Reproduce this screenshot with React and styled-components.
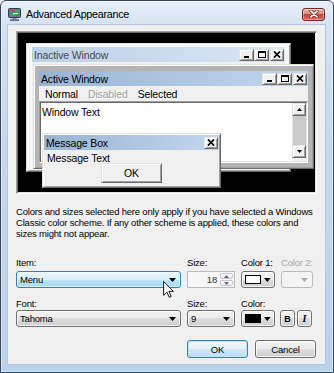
import React from 'react';
import styled, { createGlobalStyle, css } from 'styled-components';

const GlobalStyle = createGlobalStyle`
  html, body { margin: 0; padding: 0; background: #ffffff; }
  body { font-family: "Liberation Sans", Arial, sans-serif; color: #000; }
  *, *::before, *::after { box-sizing: border-box; }
`;

const raised = css`
  border: 1px solid;
  border-color: #e3e3e3 #696969 #696969 #e3e3e3;
  box-shadow: inset 1px 1px 0 #ffffff, inset -1px -1px 0 #a0a0a0;
`;

const sunken = css`
  border: 1px solid;
  border-color: #a0a0a0 #ffffff #ffffff #a0a0a0;
  box-shadow: inset 1px 1px 0 #696969, inset -1px -1px 0 #e3e3e3;
`;

const previewFont = css`
  font-size: 10.5px;
  letter-spacing: -0.15px;
  white-space: nowrap;
`;

const uiFont = css`
  font-size: 9.5px;
  letter-spacing: -0.2px;
  white-space: nowrap;
`;

/* ---------- dialog frame ---------- */

const Frame = styled.div`
  width: 334px;
  height: 373px;
  display: flex;
  flex-direction: column;
  border: 1px solid #34465e;
  border-radius: 6px 6px 0 0;
  background: linear-gradient(to bottom, #e8f0f9 0px, #d5e2f2 24px, #c4d7ed 140px, #bcd1ea 100%);
  box-shadow: inset 0 0 0 1px rgba(255, 255, 255, 0.5), inset 0 -1px 0 #86d9ef;
  overflow: hidden;
`;

const TitleBar = styled.div`
  height: 23px;
  flex: none;
  display: flex;
  align-items: center;
  padding: 3px 8px 0 7px;
`;

const AppIconBox = styled.div`
  width: 13px;
  height: 13px;
  margin-right: 5px;
  display: flex;
`;

const TitleText = styled.div`
  flex: 1;
  font-size: 10.8px;
  letter-spacing: -0.3px;
  color: #000;
  white-space: nowrap;
`;

const CloseButton = styled.div`
  width: 23px;
  height: 13px;
  border: 1px solid #6a2a24;
  border-radius: 3px;
  background: linear-gradient(to bottom, #eab2aa 0%, #dc8a7e 45%, #c5473a 50%, #d66a58 100%);
  box-shadow: inset 0 0 0 1px rgba(255, 255, 255, 0.35);
  display: flex;
  align-items: center;
  justify-content: center;
`;

const Client = styled.div`
  flex: 1;
  margin: 0 7px 7px 6px;
  background: #f0f0f0;
  border: 1px solid #b3c6dd;
  padding: 6px 8px 0 8px;
  display: flex;
  flex-direction: column;
`;

/* ---------- preview canvas ---------- */

const Preview = styled.div`
  position: relative;
  height: 163px;
  flex: none;
  background: #000;
  ${sunken}
`;

const PreviewWindow = styled.div`
  position: absolute;
  left: ${p => p.$x}px;
  top: ${p => p.$y}px;
  width: ${p => p.$w}px;
  height: ${p => p.$h}px;
  background: ${p => p.$bg};
  padding: ${p => p.$pad};
  display: flex;
  flex-direction: column;
  ${raised}
`;

const Caption = styled.div`
  height: 15px;
  flex: none;
  display: flex;
  align-items: center;
  padding: 0 1px 0 2px;
  background: ${p =>
    p.$active
      ? 'linear-gradient(to right, #99b4d1, #c3d7ee)'
      : 'linear-gradient(to right, #bcd0e7, #d9e6f4)'};
  color: ${p => (p.$active ? '#000' : '#434e54')};
  ${previewFont}
`;

const CaptionTitle = styled.span`
  flex: 1;
  overflow: hidden;
`;

const CapButton = styled.span`
  width: ${p => p.$w || 15}px;
  height: 12px;
  margin-left: ${p => p.$gap || 0}px;
  background: #f0f0f0;
  display: flex;
  align-items: center;
  justify-content: center;
  ${raised}
`;

const WindowFill = styled.div`
  flex: 1;
  background: #f0f0f0;
`;

const MenuBar = styled.div`
  height: 15px;
  flex: none;
  display: flex;
  align-items: center;
  gap: 10px;
  padding-left: 6px;
  background: #f0f0f0;
  ${previewFont}
`;

const MenuItem = styled.span`
  color: ${p => (p.$disabled ? '#a0a0a0' : '#000')};
  text-shadow: ${p => (p.$disabled ? '1px 1px 0 #ffffff' : 'none')};
`;

const TextArea = styled.div`
  flex: 1;
  display: flex;
  background: #ffffff;
  padding: 1px;
  ${sunken}
`;

const WindowText = styled.div`
  flex: 1;
  padding: 3px 0 0 1px;
  line-height: 12px;
  ${previewFont}
`;

const ScrollBar = styled.div`
  width: 14px;
  display: flex;
  flex-direction: column;
  background: #f0f0f0;
  padding-bottom: 3px;
`;

const ScrollButton = styled.div`
  height: 13px;
  flex: none;
  background: #f0f0f0;
  display: flex;
  align-items: center;
  justify-content: center;
  ${raised}
`;

const ScrollTrack = styled.div`
  flex: 1;
  background: #cbcbcb;
  border-left: 1px solid #e8e8e8;
`;

const MessageText = styled.div`
  position: relative;
  z-index: 1;
  padding: 2px 0 0 3px;
  line-height: 12px;
  ${previewFont}
`;

const ClassicButton = styled.div`
  width: 61px;
  height: 20px;
  margin: -1px 0 0 57px;
  background: #f0f0f0;
  display: flex;
  align-items: center;
  justify-content: center;
  ${raised}
  ${previewFont}
`;

/* ---------- explanation + controls ---------- */

const Note = styled.p`
  margin: 12px 0 0 0;
  line-height: 11px;
  color: #000;
  ${uiFont}
`;

const Controls = styled.div`
  position: relative;
  margin-top: 18px;
  display: grid;
  grid-template-columns: 165px 48px 34px 32px;
  grid-template-rows: 14px 17px 22px 17px;
  column-gap: 6px;
`;

const Label = styled.div`
  line-height: 12px;
  align-self: ${p => (p.$bottom ? 'end' : 'start')};
  color: ${p => (p.$disabled ? '#a7a7a7' : '#000')};
  ${uiFont}
`;

const vistaFace = css`
  border: 1px solid #707070;
  border-radius: 3px;
  background: linear-gradient(to bottom, #f2f2f2 0%, #ebebeb 50%, #dddddd 50%, #cfcfcf 100%);
  box-shadow: inset 0 0 0 1px rgba(255, 255, 255, 0.75);
`;

const vistaHot = css`
  border: 1px solid #3c7fb1;
  border-radius: 3px;
  background: linear-gradient(to bottom, #eaf6fd 0%, #d9f0fc 50%, #bee6fd 50%, #a7d9f5 100%);
  box-shadow: inset 0 0 0 1px rgba(255, 255, 255, 0.6);
`;

const Combo = styled.div`
  height: 17px;
  display: flex;
  align-items: center;
  justify-content: space-between;
  padding: 0 4px 0 3px;
  color: #000;
  ${p => (p.$hot ? vistaHot : vistaFace)}
  ${uiFont}
`;

const Spinner = styled.div`
  height: 17px;
  display: flex;
  padding: 1px;
  border: 1px solid #b8bcc2;
  background: #f6f6f6;
`;

const SpinValue = styled.div`
  flex: 1;
  text-align: right;
  padding-right: 3px;
  line-height: 13px;
  color: #333;
  ${uiFont}
`;

const SpinButtons = styled.div`
  width: 13px;
  display: flex;
  flex-direction: column;
  gap: 1px;
`;

const SpinButton = styled.div`
  flex: 1;
  border: 1px solid #c4c8ce;
  border-radius: 2px;
  background: linear-gradient(to bottom, #fcfcfc, #ebebeb);
  display: flex;
  align-items: center;
  justify-content: center;
`;

const ColorButton = styled.div`
  height: 17px;
  display: flex;
  align-items: center;
  gap: 3px;
  padding: 0 3px 0 3px;
  ${vistaFace}
`;

const Swatch = styled.span`
  width: 17px;
  height: 9px;
  border: 1px solid #000;
  background: ${p => p.$color};
`;

const DisabledDrop = styled.div`
  height: 17px;
  display: flex;
  align-items: center;
  justify-content: flex-end;
  padding-right: 4px;
  border: 1px solid #b9b9b9;
  border-radius: 3px;
  background: #f4f4f4;
`;

const StyleGroup = styled.div`
  display: flex;
  gap: 2px;
  margin-left: -1px;
`;

const StyleButton = styled.div`
  width: 15px;
  height: 17px;
  display: flex;
  align-items: center;
  justify-content: center;
  font-weight: bold;
  font-size: ${p => (p.$italic ? '10px' : '9px')};
  font-style: ${p => (p.$italic ? 'italic' : 'normal')};
  font-family: ${p => (p.$italic ? '"Liberation Serif", serif' : '"Liberation Sans", sans-serif')};
  ${vistaFace}
`;

const Cursor = styled.svg`
  position: absolute;
  left: 147px;
  top: 24px;
`;

const ButtonRow = styled.div`
  margin-top: 13px;
  display: flex;
  justify-content: flex-end;
  gap: 7px;
  padding-right: 1px;
`;

const DialogButton = styled.div`
  width: 61px;
  height: 18px;
  display: flex;
  align-items: center;
  justify-content: center;
  ${p =>
    p.$default
      ? css`
          border: 1px solid #3c7fb1;
          border-radius: 3px;
          background: linear-gradient(to bottom, #f3f9fd 0%, #e5f1f9 50%, #d2e6f3 50%, #c4ddef 100%);
          box-shadow: inset 0 0 0 1px #b4e6fb;
        `
      : vistaFace}
  ${uiFont}
`;

/* ---------- drawings ---------- */

const DownArrow = ({ color = '#000' }) => (
  <svg width="7" height="4" viewBox="0 0 7 4">
    <path d="M0 0H7L3.5 4Z" fill={color} />
  </svg>
);

const SmallArrow = ({ up, color = '#000' }) => (
  <svg width="5" height="3" viewBox="0 0 5 3">
    <path d={up ? 'M0 3H5L2.5 0Z' : 'M0 0H5L2.5 3Z'} fill={color} />
  </svg>
);

const MinGlyph = () => (
  <svg width="8" height="7" viewBox="0 0 8 7">
    <rect x="1" y="5" width="5" height="2" fill="#000" />
  </svg>
);

const MaxGlyph = () => (
  <svg width="8" height="7" viewBox="0 0 8 7">
    <path fillRule="evenodd" d="M0 0H8V7H0Z M1 2H7V6H1Z" fill="#000" />
  </svg>
);

const CloseGlyph = () => (
  <svg width="8" height="7" viewBox="0 0 8 7">
    <path d="M1 0.5L7 6.5M7 0.5L1 6.5" stroke="#000" strokeWidth="1.7" />
  </svg>
);

const CaptionButtons = ({ close = true, full = true }) => (
  <>
    {full && (
      <>
        <CapButton>
          <MinGlyph />
        </CapButton>
        <CapButton>
          <MaxGlyph />
        </CapButton>
      </>
    )}
    {close && (
      <CapButton $w={14} $gap={full ? 1 : 0}>
        <CloseGlyph />
      </CapButton>
    )}
  </>
);

const AppIcon = () => (
  <svg width="13" height="13" viewBox="0 0 13 13">
    <defs>
      <linearGradient id="scr" x1="0" y1="0" x2="1" y2="1">
        <stop offset="0" stopColor="#2c6ed8" />
        <stop offset="0.55" stopColor="#3aae4c" />
        <stop offset="1" stopColor="#1f8b3c" />
      </linearGradient>
    </defs>
    <rect x="0.5" y="0.5" width="12" height="9" rx="1" fill="#6b7b92" stroke="#2f3b4e" />
    <rect x="2" y="2" width="9" height="6" fill="url(#scr)" />
    <rect x="2" y="2" width="6" height="1.5" fill="#d84848" />
    <rect x="5" y="5" width="5" height="1.2" fill="#f2f2f2" />
    <rect x="4.5" y="10" width="4" height="1.3" fill="#7d8ca2" />
    <rect x="2" y="11.3" width="9" height="1.5" fill="#4b5b72" />
  </svg>
);

const CloseX = () => (
  <svg width="10" height="8" viewBox="0 0 10 8">
    <path d="M2 1.2L8 6.8M8 1.2L2 6.8" stroke="#5a1d17" strokeWidth="3.2" strokeLinecap="round" />
    <path d="M2 1.2L8 6.8M8 1.2L2 6.8" stroke="#ffffff" strokeWidth="1.8" strokeLinecap="round" />
  </svg>
);

const ArrowCursor = () => (
  <Cursor width="11" height="17" viewBox="0 0 12 19">
    <path
      d="M0.5 0.5V16L4.2 12.4L6.8 18.2L9 17.2L6.5 11.6H11.5Z"
      fill="#ffffff"
      stroke="#000"
      strokeWidth="1"
      strokeLinejoin="miter"
    />
  </Cursor>
);

/* ---------- page ---------- */

export default function App() {
  return (
    <>
      <GlobalStyle />
      <Frame>
        <TitleBar>
          <AppIconBox>
            <AppIcon />
          </AppIconBox>
          <TitleText>Advanced Appearance</TitleText>
          <CloseButton>
            <CloseX />
          </CloseButton>
        </TitleBar>

        <Client>
          <Preview>
            <PreviewWindow $x={9} $y={11} $w={265} $h={129} $bg="#f4f7fc" $pad="3px 5px">
              <Caption>
                <CaptionTitle>Inactive Window</CaptionTitle>
                <CaptionButtons />
              </Caption>
              <WindowFill />
            </PreviewWindow>

            <PreviewWindow $x={16} $y={32} $w={281} $h={105} $bg="#b4b4b4" $pad="6px 5px 5px">
              <Caption $active>
                <CaptionTitle>Active Window</CaptionTitle>
                <CaptionButtons />
              </Caption>
              <MenuBar>
                <MenuItem>Normal</MenuItem>
                <MenuItem $disabled>Disabled</MenuItem>
                <MenuItem>Selected</MenuItem>
              </MenuBar>
              <TextArea>
                <WindowText>Window Text</WindowText>
                <ScrollBar>
                  <ScrollButton>
                    <SmallArrow up />
                  </ScrollButton>
                  <ScrollTrack />
                  <ScrollButton>
                    <SmallArrow />
                  </ScrollButton>
                </ScrollBar>
              </TextArea>
            </PreviewWindow>

            <PreviewWindow $x={25} $y={101} $w={179} $h={55} $bg="#f0f0f0" $pad="1px">
              <Caption $active>
                <CaptionTitle>Message Box</CaptionTitle>
                <CaptionButtons full={false} />
              </Caption>
              <MessageText>Message Text</MessageText>
              <ClassicButton>OK</ClassicButton>
            </PreviewWindow>
          </Preview>

          <Note>
            Colors and sizes selected here only apply if you have selected a Windows
            <br />
            Classic color scheme. If any other scheme is applied, these colors and
            <br />
            sizes might not appear.
          </Note>

          <Controls>
            <Label>Item:</Label>
            <Label>Size:</Label>
            <Label>Color 1:</Label>
            <Label $disabled>Color 2:</Label>

            <Combo $hot>
              <span>Menu</span>
              <DownArrow />
            </Combo>
            <Spinner>
              <SpinValue>18</SpinValue>
              <SpinButtons>
                <SpinButton>
                  <SmallArrow up color="#5a6a82" />
                </SpinButton>
                <SpinButton>
                  <SmallArrow color="#5a6a82" />
                </SpinButton>
              </SpinButtons>
            </Spinner>
            <ColorButton>
              <Swatch $color="#ffffff" />
              <DownArrow />
            </ColorButton>
            <DisabledDrop>
              <DownArrow color="#a8a8a8" />
            </DisabledDrop>

            <Label $bottom>Font:</Label>
            <Label $bottom>Size:</Label>
            <Label $bottom>Color:</Label>
            <Label $bottom />

            <Combo>
              <span>Tahoma</span>
              <DownArrow />
            </Combo>
            <Combo>
              <span>9</span>
              <DownArrow />
            </Combo>
            <ColorButton>
              <Swatch $color="#000000" />
              <DownArrow />
            </ColorButton>
            <StyleGroup>
              <StyleButton>B</StyleButton>
              <StyleButton $italic>I</StyleButton>
            </StyleGroup>

            <ArrowCursor />
          </Controls>

          <ButtonRow>
            <DialogButton $default>OK</DialogButton>
            <DialogButton>Cancel</DialogButton>
          </ButtonRow>
        </Client>
      </Frame>
    </>
  );
}
